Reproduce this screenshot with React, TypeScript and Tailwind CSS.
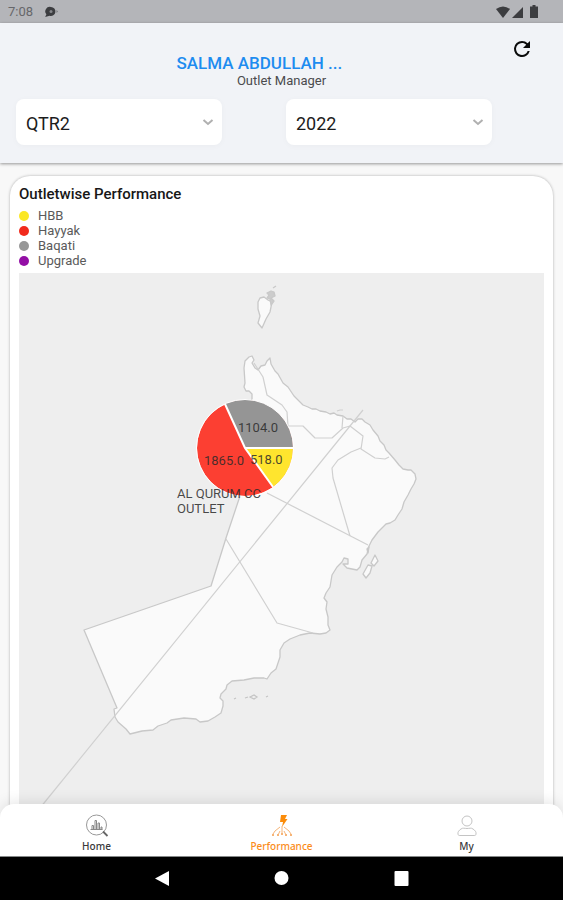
import type { ReactNode } from "react";

const legend = [
  { label: "HBB", dot: "bg-[#fbe725]" },
  { label: "Hayyak", dot: "bg-[#f12a1c]" },
  { label: "Baqati", dot: "bg-[#979797]" },
  { label: "Upgrade", dot: "bg-[#930fa5]" },
];

function StatusBar() {
  return (
    <div className="flex h-[23px] shrink-0 items-center justify-between bg-[#b4b5b9] pl-2 pr-[25px] text-[#3c3d40]">
      <div className="flex items-center gap-2.5">
        <span className="text-[13px] leading-4 text-[#66676a]">7:08</span>
        <svg width="16" height="12" viewBox="0 0 16 12" aria-hidden="true">
          <path d="M8 1a4.500 4.500 0 1 1-1.400 8.800L2.200 11l1.200-2.700A4.500 4.500 0 0 1 8 1Z" fill="currentColor" />
          <circle cx="8" cy="5.500" r="1.500" fill="#85868a" />
          <path d="M13.500 4 15 5.500 13.500 7Z" fill="#77787c" />
        </svg>
      </div>
      <div className="flex items-center gap-0.5">
        <svg width="14" height="12" viewBox="0 0 14 12" aria-hidden="true">
          <path d="M0 3Q7-2.200 14 3L7 12Z" fill="currentColor" />
        </svg>
        <svg width="12" height="12" viewBox="0 0 12 12" aria-hidden="true">
          <path d="M0 12 11 1V12Z" fill="currentColor" />
        </svg>
        <svg className="ml-1" width="8" height="13" viewBox="0 0 8 13" aria-hidden="true">
          <path d="M2.500 0h3v1.500H8V13H0V1.500h2.500Z" fill="currentColor" />
        </svg>
      </div>
    </div>
  );
}

function Picker({ label, value, options }: { label: string; value: string; options: string[] }) {
  return (
    <div className="relative mr-16">
      <select
        aria-label={label}
        defaultValue={value}
        className="h-[46px] w-full appearance-none rounded-lg bg-white pl-2.5 pr-8 pt-0.5 text-[18px] text-[#1c1c1c] shadow-[0_1px_6px_rgba(0,0,0,0.03)]"
      >
        {options.map((o) => (
          <option key={o}>{o}</option>
        ))}
      </select>
      <svg
        className="pointer-events-none absolute right-2 top-[17px]"
        width="12"
        height="12"
        viewBox="0 0 12 12"
        fill="none"
        stroke="#b0b0b0"
        strokeWidth="2"
        aria-hidden="true"
      >
        <path d="m1.500 4 4.500 4 4.500-4" />
      </svg>
    </div>
  );
}

function Header() {
  return (
    <header className="relative z-10 h-[140px] shrink-0 bg-[#f1f3f7] shadow-[0_1px_3px_rgba(0,0,0,0.4)]">
      <button type="button" aria-label="Refresh" className="absolute right-[29px] top-3.5">
        <svg width="24" height="24" viewBox="0 0 24 24" fill="#0b0b0b" aria-hidden="true">
          <path d="M17.650 6.350A7.960 7.960 0 0 0 12 4a8 8 0 1 0 7.730 10h-2.080A6 6 0 1 1 12 6c1.660 0 3.140.690 4.220 1.780L13 11h7V4l-2.350 2.350Z" />
        </svg>
      </button>
      <div className="mx-auto w-[210px] pt-[30px]">
        <h1 className="whitespace-nowrap text-[17px] font-medium leading-5 text-[#1d8cf0]">SALMA ABDULLAH ...</h1>
        <p className="text-center text-[13px] leading-4 text-[#4b4b4e]">Outlet Manager</p>
      </div>
      <div className="grid grid-cols-2 pl-4 pr-[7px] pt-2.5">
        <Picker label="Quarter" value="QTR2" options={["QTR1", "QTR2", "QTR3", "QTR4"]} />
        <Picker label="Year" value="2022" options={["2021", "2022"]} />
      </div>
    </header>
  );
}

function OmanMap() {
  return (
    <svg
      className="block h-auto w-full bg-[#eeeeee]"
      viewBox="19 273 525 560"
      role="img"
      aria-label="Map of Oman with outlet performance"
    >
      <g fill="#fafafa" stroke="#c8c8c8" strokeWidth="1.300" strokeLinejoin="round">
        {/* mainland */}
        <path d="M244 368 245 361 249 357 252 356 254 360 252 363 255 368 258 370 261 366 265 365 267 361 270 358 271 364 275 371 278 374 283 383 288 387 294 396 303 405 308 407 312 409 316 409 320 411 326 412 330 414 334 413 337 415 343 416 347 419 351 419 355 422 358 419 362 419 365 422 370 425 373 430 378 436 380 441 384 445 386 450 389 453 395 460 399 465 403 469 408 470 411 470 415 474 416 479 414 484 411 489 408 495 404 502 402 509 398 515 395 520 390 523 386 524 382 528 378 532 372 540 369 546 367 554 362 560 360 567 357 570 347 568 343 564 348 564 348 559 344 558 342 562 337 567 332 575 330 587 326 593 324 598 327 602 326 609 328 617 328 625 330 630 326 633 320 634 310 633 300 635 290 639 284 643 280 650 280 657 278 663 276 669 271 673 267 679 264 678 254 678 244 680 232 681 227 685 226 689 221 694 220 698 223 701 223 706 221 713 215 717 208 721 200 722 196 719 184 718 171 720 167 723 158 726 153 730 142 731 130 734 126 729 118 722 115 717 114 709 117 708 84 630 211 586 226 538 240 496 247 430 250 402 252 399 252 394 249 391 246 391 244 387 245 383Z" />
        <path d="M258 302 260 298 264 297 268 300 272 302 271 307 270 312 266 319 262 328 258 323 260 316 258 309Z" />
        <path d="m267 293 4-2 3 1 1 4-4 2 3 3-3 4-1-6-3-1 2-3Z" fill="#cccccc" />
        <path d="m273 288 3-2" />
        <path d="m363 574 5-9 4 1-2 7-4 5Zm8-11 4-8 3 6-4 5Z" />
        <path d="m367 549 2-2-1 6Z" fill="#bbbbbb" />
      </g>
      {/* governorate boundaries */}
      <g fill="none" stroke="#d0d0d0" strokeWidth="1.200" strokeLinejoin="round">
        <path d="m254 363 9 14 4 18 15 10 5 7 1 14 15 0 12 12 17 0 11-10 7-2 13 10-2 13 14 9 10 1 4-2" />
        <path d="m343 416-1 12m19 20-10 4-13 8-6 8 1 10 17 58" />
        <path d="m40 808 323-398" />
        <path d="m267 493 101 52" />
        <path d="m226 539 51 84 36 10" />
        <path d="m337 411 3-1 3 0" />
      </g>
      <g fill="none" stroke="#c4c4c4" strokeWidth="1.200">
        <path d="m234 699 2-1m9 0 3-1m2 0 4-2 3 2-3 2-4-2Zm16 0 2-1" />
      </g>
      <circle cx="245" cy="448" r="48" fill="#fc3f32" />
      <path d="M245 448 225 404A48 48 0 0 1 293 448Z" fill="#959595" />
      <path d="M245 448H293A48 48 0 0 1 273 487Z" fill="#ffe52e" />
      <circle cx="245" cy="448" r="48.500" fill="none" stroke="#ffffff" />
      <path d="M225 404 245 448 273 487M245 448H293" fill="none" stroke="#ffffff" strokeWidth="2" />
      <g fill="#2a2a2a" fillOpacity="0.850" fontSize="13">
        <text x="238" y="432">1104.0</text>
        <text x="204" y="465">1865.0</text>
        <text x="250" y="464">518.0</text>
        <text x="177" y="498">AL QURUM CC</text>
        <text x="177" y="513">OUTLET</text>
      </g>
    </svg>
  );
}

function Tab({ label, active, children }: { label: string; active?: boolean; children: ReactNode }) {
  return (
    <a
      href="#"
      aria-current={active ? "page" : undefined}
      className={`flex w-[185px] flex-col items-center pt-[9px] font-['Noto_Sans',sans-serif] text-[10px] font-medium leading-[14px] ${
        active ? "text-[#fb8c1a]" : "text-[#38383a]"
      }`}
    >
      {children}
      <span className="mt-px">{label}</span>
    </a>
  );
}

function BottomTabs() {
  return (
    <nav className="relative z-10 flex h-[52px] shrink-0 justify-center rounded-t-[14px] bg-white shadow-[0_-2px_14px_rgba(0,0,0,0.1)]">
      <Tab label="Home">
        <svg width="26" height="25" viewBox="0 0 26 25" fill="none" aria-hidden="true">
          <circle cx="12.500" cy="12" r="10" stroke="#999999" />
          <path d="m19 18.500 4.500 4.500" stroke="#666666" strokeWidth="1.800" />
          <path d="M8 16.500v-4h1.500v4m1.500 0v-9h1.500v9m1.500 0V10h1.500v6.500m1.500 0V14h1v2.500M6.500 16.500h12" stroke="#888888" />
        </svg>
      </Tab>
      <Tab label="Performance" active>
        <svg width="26" height="25" viewBox="0 0 26 25" fill="none" aria-hidden="true">
          <path d="M12 2h6l-2 4h2.500L13 14l1-5h-3Z" fill="#fb8c0a" />
          <path d="M13 13v8M11 14l-5 4-2 3m11-7 5 4 2 3m-11-3-2 4m6-4 2 4" stroke="#f6b477" />
          <path d="M3 22h2m3 0h2m2-1h2m2 1h2m3 0h2" stroke="#f6b477" strokeWidth="2" />
        </svg>
      </Tab>
      <Tab label="My">
        <svg width="26" height="25" viewBox="0 0 26 25" fill="none" stroke="#c4c4c4" aria-hidden="true">
          <circle cx="13" cy="8" r="5" />
          <path d="M7 16c2-1.500 3.500-.5 6-.5s4-1 6 .5c2 1.300 3.500 3 3 5.300-.2.900-.8 1.200-2 1.200H6c-1.200 0-1.800-.3-2-1.200C3.500 19 5 17.300 7 16Z" />
        </svg>
      </Tab>
    </nav>
  );
}

function SystemNav() {
  return (
    <div className="flex h-11 shrink-0 items-center justify-center gap-[104px] border-t border-[#8a8d8d] bg-black text-white">
      <button type="button" aria-label="Back">
        <svg width="16" height="16" viewBox="0 0 16 16" fill="currentColor" aria-hidden="true">
          <path d="M1 7.500 15 0V15Z" />
        </svg>
      </button>
      <button type="button" aria-label="Home screen">
        <svg width="16" height="16" viewBox="0 0 16 16" fill="currentColor" aria-hidden="true">
          <circle cx="7.500" cy="7" r="7" />
        </svg>
      </button>
      <button type="button" aria-label="Recent apps">
        <svg width="16" height="16" viewBox="0 0 16 16" fill="currentColor" aria-hidden="true">
          <rect x="0.500" y="0" width="14" height="15" rx="1" />
        </svg>
      </button>
    </div>
  );
}

export default function App() {
  return (
    <div className="flex h-screen flex-col overflow-hidden bg-[#f8f8f8] font-[Roboto,sans-serif]">
      <StatusBar />
      <Header />
      <main className="-mb-4 min-h-0 flex-1 overflow-hidden px-2.5 pt-[13px]">
        <section className="rounded-[20px] bg-white px-[9px] pt-2 shadow-[0_0_3px_rgba(0,0,0,0.3)]">
          <h2 className="text-[15px] font-medium leading-5 text-[#171717]">Outletwise Performance</h2>
          <ul className="mb-[5px] mt-1">
            {legend.map((item) => (
              <li key={item.label} className="flex items-center gap-[9px] text-[13px] leading-[15px] text-[#5a5a5a]">
                <span className={`size-2.5 rounded-full ${item.dot}`} />
                {item.label}
              </li>
            ))}
          </ul>
          <OmanMap />
        </section>
      </main>
      <BottomTabs />
      <SystemNav />
    </div>
  );
}
